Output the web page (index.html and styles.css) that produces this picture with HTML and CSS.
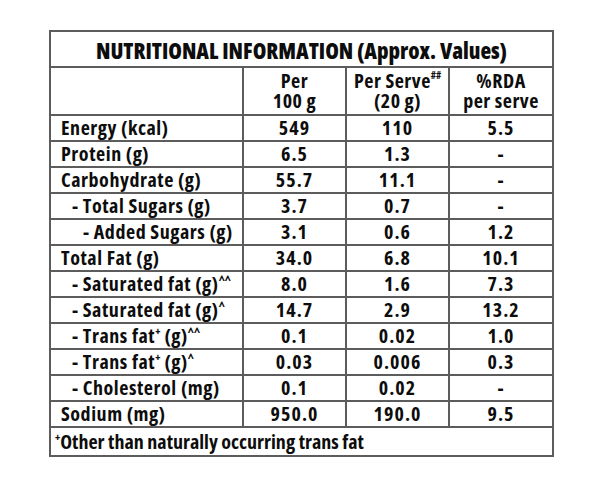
FILE: index.html
```html
<!DOCTYPE html>
<html>
<head>
<meta charset="utf-8">
<link rel="stylesheet" href="styles.css">
</head>
<body>
<table class="nut">
  <colgroup>
    <col class="c-name">
    <col class="c-val">
    <col class="c-val">
    <col class="c-rda">
  </colgroup>
  <tr class="r-title"><td colspan="4" class="title">NUTRITIONAL INFORMATION (Approx. Values)</td></tr>
  <tr class="r-head">
    <td></td>
    <td class="h"><span class="hl">Per<br>100 g</span></td>
    <td class="h"><span class="hl">Per Serve<sup class="hash">##</sup><br>(20 g)</span></td>
    <td class="h"><span class="hl">%RDA<br>per serve</span></td>
  </tr>
  <tr><td class="n">Energy (kcal)</td><td class="v">549</td><td class="v">110</td><td class="v">5.5</td></tr>
  <tr><td class="n">Protein (g)</td><td class="v">6.5</td><td class="v">1.3</td><td class="v">-</td></tr>
  <tr><td class="n">Carbohydrate (g)</td><td class="v">55.7</td><td class="v">11.1</td><td class="v">-</td></tr>
  <tr><td class="n i1">- Total Sugars (g)</td><td class="v">3.7</td><td class="v">0.7</td><td class="v">-</td></tr>
  <tr><td class="n i2">- Added Sugars (g)</td><td class="v">3.1</td><td class="v">0.6</td><td class="v">1.2</td></tr>
  <tr><td class="n">Total Fat (g)</td><td class="v">34.0</td><td class="v">6.8</td><td class="v">10.1</td></tr>
  <tr><td class="n i1">- Saturated fat (g)<sup class="car">^^</sup></td><td class="v">8.0</td><td class="v">1.6</td><td class="v">7.3</td></tr>
  <tr><td class="n i1">- Saturated fat (g)<sup class="car">^</sup></td><td class="v">14.7</td><td class="v">2.9</td><td class="v">13.2</td></tr>
  <tr><td class="n i1">- Trans fat<sup class="plus">+</sup> (g)<sup class="car">^^</sup></td><td class="v">0.1</td><td class="v">0.02</td><td class="v">1.0</td></tr>
  <tr><td class="n i1">- Trans fat<sup class="plus">+</sup> (g)<sup class="car">^</sup></td><td class="v">0.03</td><td class="v">0.006</td><td class="v">0.3</td></tr>
  <tr><td class="n i1">- Cholesterol (mg)</td><td class="v">0.1</td><td class="v">0.02</td><td class="v">-</td></tr>
  <tr><td class="n">Sodium (mg)</td><td class="v">950.0</td><td class="v">190.0</td><td class="v">9.5</td></tr>
  <tr class="r-foot"><td colspan="4" class="foot"><sup class="plus">+</sup>Other than naturally occurring trans fat</td></tr>
</table>
</body>
</html>
```
FILE: styles.css
```css
html, body {
  margin: 0;
  padding: 0;
  background: #ffffff;
}
body {
  padding: 30px 0 0 49px;
  font-family: "Open Sans", "Liberation Sans", sans-serif;
  font-stretch: 75%;
  font-weight: 750;
  color: #0d0d0d;
}
.nut {
  border-collapse: collapse;
  table-layout: fixed;
  width: 505px;
}
.c-name { width: 193px; }
.c-val { width: 103px; }
.c-rda { width: 104px; }
.nut td {
  border: 2px solid #5c5c5c;
  padding: 0;
  font-size: 20px;
  line-height: 22px;
  height: 24px;
  vertical-align: middle;
  white-space: nowrap;
}
.r-title td { height: 33px; }
.r-head td { height: 46px; }
.r-foot td { height: 27px; }
.nut td.title {
  text-align: center;
  font-size: 22px;
  font-weight: 800;
  padding-top: 1px;
}
.h {
  text-align: center;
  letter-spacing: 0.5px;
}
.v {
  text-align: center;
  letter-spacing: 1.1px;
}
.hl {
  display: inline-block;
  line-height: 20px;
  padding-top: 1px;
}
.nut td.n {
  padding-left: 10px;
  letter-spacing: 0.55px;
}
.nut td.n.i1 { padding-left: 21px; }
.nut td.n.i2 { padding-left: 32px; }
.nut td.foot {
  padding-left: 4px;
  font-size: 20px;
}
sup {
  line-height: 0;
  vertical-align: baseline;
  position: relative;
  letter-spacing: 0;
}
.hash { font-size: 10px; top: -9px; }
.car { font-size: 12px; top: -7px; }
.plus { font-size: 11px; top: -8px; }
```
